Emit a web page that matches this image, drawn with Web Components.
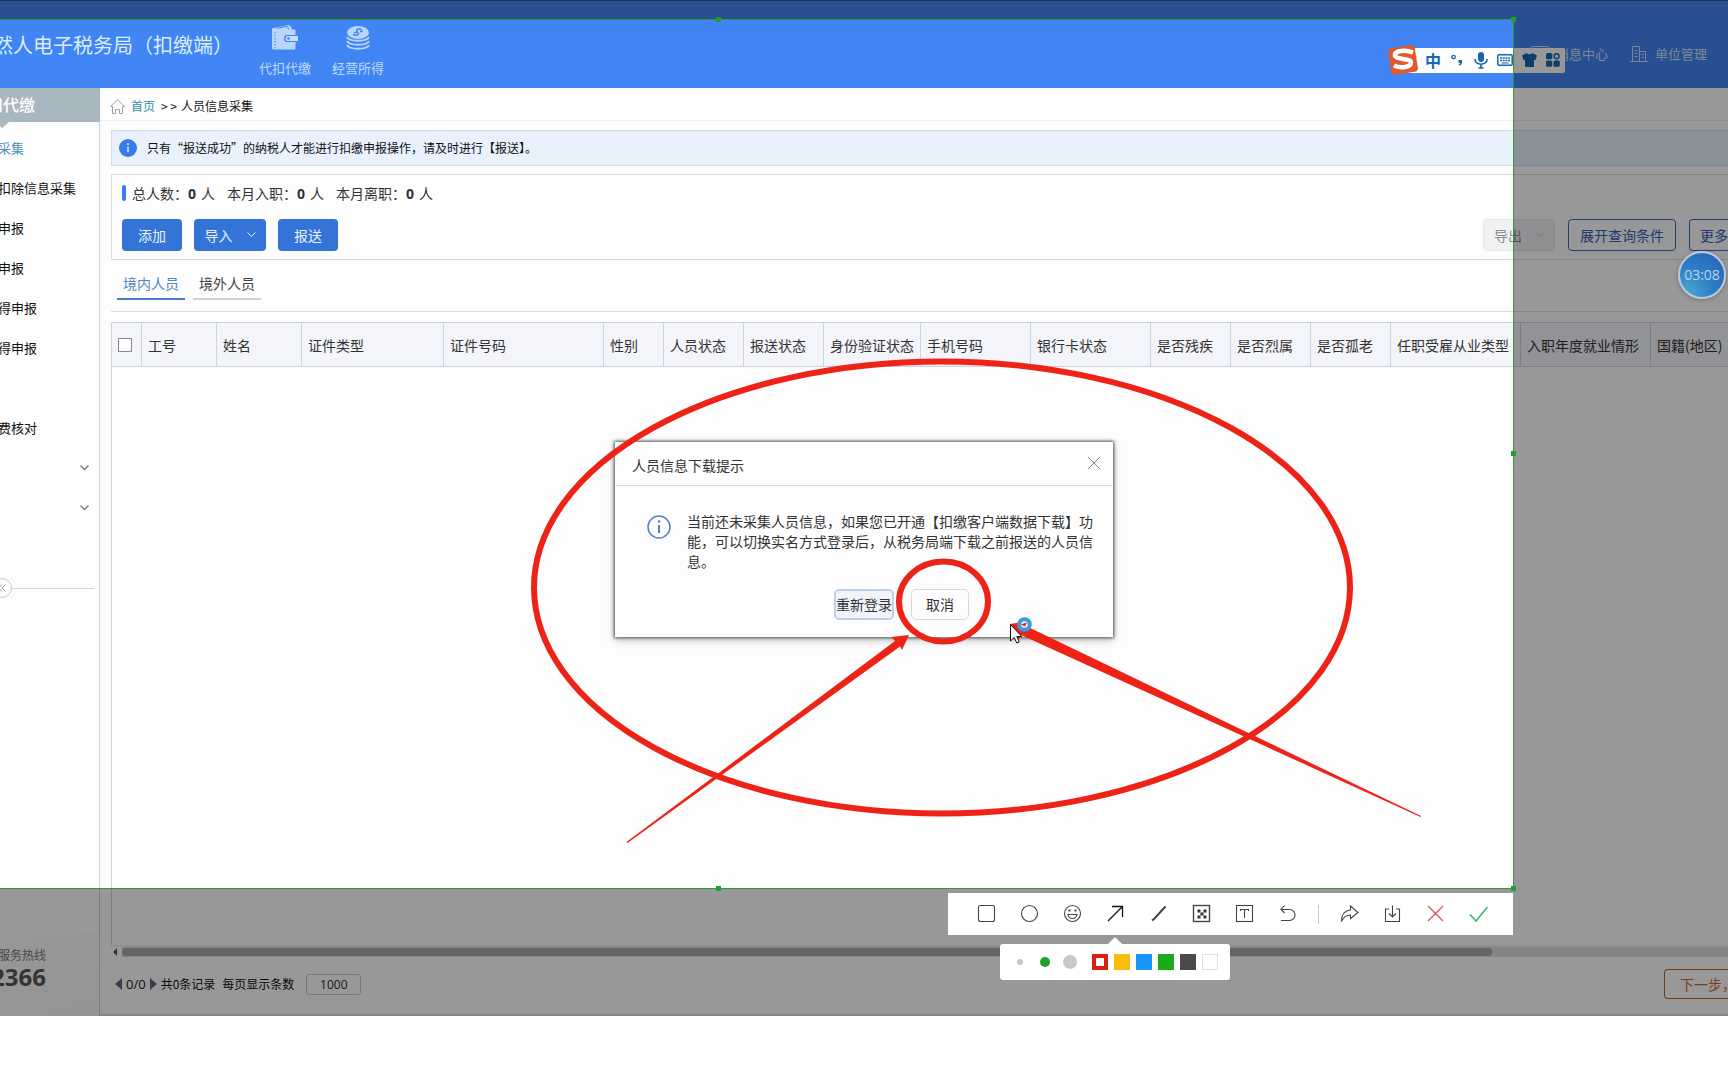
<!DOCTYPE html>
<html lang="zh-CN">
<head>
<meta charset="utf-8">
<title>自然人电子税务局（扣缴端）</title>
<style>
  html, body { margin: 0; height: 100%; background: #fdfdfd; }
  body { font: 14px/20px "Noto Sans CJK SC", "Open Sans", sans-serif; color: #333; overflow: hidden; }
</style>
</head>
<body>
<tax-app></tax-app>
<script>
const BASE = `*{box-sizing:border-box}button,input{font:inherit;margin:0}button{padding:0;background:none;border:0;color:inherit}a{color:inherit;text-decoration:none}svg{display:block}`;
function define(name, css, html) {
  const t = document.createElement('template');
  t.innerHTML = `<style>${BASE}${css}</style>${html}`;
  customElements.define(name, class extends HTMLElement {
    constructor() {
      super();
      this.attachShadow({ mode: 'open' }).append(t.content.cloneNode(true));
    }
  });
}

/* icon above label, used in the top bar */
define('module-link', `
  :host{display:block}
  a{display:flex;flex-direction:column;align-items:center;gap:7px;font-size:13px;color:#bcdcfd}
  .i{height:26px}`,
  `<a href="#"><span class="i"><slot name="icon"></slot></span><span><slot></slot></span></a>`);

define('top-link', `
  :host{display:block}
  a{display:flex;align-items:center;gap:7px;font-size:13px;color:#cfe2fb}`,
  `<a href="#"><slot name="icon"></slot><span><slot></slot></span></a>`);

define('app-header', `
  :host{display:flex;align-items:flex-start;height:88px;background:#4184f4;color:#d9efff;border-top:1px solid #33528f;white-space:nowrap}
  h1{margin:32px 0 0 -7px;font-size:20px;line-height:24px;font-weight:400}
  nav{display:flex;gap:21px;margin:24px 0 0 26px}
  .links{display:flex;gap:22px;margin:43px 21px 0 auto}`,
  `<h1>然人电子税务局（扣缴端）</h1>
  <nav>
    <module-link><svg slot="icon" width="26" height="26" viewBox="0 0 26 26"><path d="M0 3.500 16 0l3 1.500 1 3h2.500q1 0 1 1v4.500H15q-3 0-3 3.500t3 3.500h8.500v6q0 1.500-1.500 1.500H1.500Q0 24.500 0 23z" fill="#b9d6fb"/><path d="M5 3.500 15 1.200l2 3.300" fill="none" stroke="#4184f4"/><path d="M3 7v16" stroke="#4184f4" stroke-dasharray="1.500 1.500"/><path d="M16 11h10v5H16q-2.500 0-2.500-2.500T16 11z" fill="#c9e0fc"/><circle cx="16.500" cy="13.500" r="1.300" fill="#4184f4"/></svg>代扣代缴</module-link>
    <module-link><svg slot="icon" width="24" height="26" viewBox="0 0 24 26" fill="none" stroke="#b9d6fb" stroke-width="2"><ellipse cx="12" cy="7.500" rx="11" ry="6.500" fill="#b9d6fb" stroke="none"/><path d="M1 12c2 5 20 5 22 0M1 16c2 5 20 5 22 0M1 20c2 5 20 5 22 0"/><path d="M16 5c-3-2-6-1-5 1s3 3 0 4c-2 .5-3 0-4-.5M8 7.500h3m3-1h3" stroke="#4184f4" stroke-width="1.500"/></svg>经营所得</module-link>
  </nav>
  <div class="links">
    <top-link><svg slot="icon" width="18" height="16" viewBox="0 0 18 16" fill="none" stroke="#cfe2fb"><rect x=".5" y=".5" width="17" height="14" rx="1"/><path d="m1 2 8 6 8-6"/></svg>消息中心</top-link>
    <top-link><svg slot="icon" width="18" height="16" viewBox="0 0 18 16" fill="none" stroke="#cfe2fb"><path d="M0 15.500h18M2.500 15V.500h7V15M9.500 5.500h6V15M4.500 4.500h3m-3 3h3m-3 3h3m4-2h2m-2 3h2"/></svg>单位管理</top-link>
  </div>`);

define('side-item', `
  :host{display:flex;align-items:center;height:40px;font-size:13px;color:#111;white-space:nowrap}
  :host([current]){color:#4a90b8}
  a{margin-left:-2px}
  svg{display:none;margin:0 10px 0 auto}
  :host([group]) svg{display:block}`,
  `<a href="#"><slot></slot></a><svg width="9" height="6" viewBox="0 0 9 6" fill="none" stroke="#777" stroke-width="1.300"><path d="m.5.5 4 4 4-4"/></svg>`);

define('side-nav', `
  :host{display:flex;flex-direction:column;width:100px;flex:none;overflow:hidden}
  h2{margin:0;height:34px;background:#a8b7c0;color:#fff;font-size:16px;line-height:32px;font-weight:500;white-space:nowrap}
  h2 span{margin-left:-13px}
  .in{flex:1;display:flex;flex-direction:column;border-right:1px solid #cfcfd6}
  .tip{width:14px;height:6px;margin-left:-5px;background:#a8b7c0;clip-path:polygon(0 0,100% 0,50% 100%)}
  .fold{display:flex;align-items:center;margin:50px 5px 0 -8px}
  .fold button{width:20px;height:20px;border:1px solid #ccc;border-radius:50%;display:grid;place-items:center}
  .fold i{flex:1;border-top:1px solid #d8d8dc}
  .hot{margin-top:auto;font-size:12px;color:#777;height:84px;padding-top:14px;line-height:18px;background:linear-gradient(160deg,#fdfdfd,#f7f7f7)}
  .hot span,.hot b{display:block;margin-left:-2px}
  .hot b{margin-left:-9px;font:700 24px/26px "Open Sans",sans-serif;color:#555}`,
  `<h2><span>扣代缴</span></h2>
  <div class="in"><div class="tip"></div>
    <side-item current>采集</side-item><side-item>扣除信息采集</side-item><side-item>申报</side-item><side-item>申报</side-item><side-item>得申报</side-item><side-item>得申报</side-item><side-item></side-item><side-item>费核对</side-item><side-item group></side-item><side-item group></side-item>
    <div class="fold"><button aria-label="收起"><svg width="8" height="8" viewBox="0 0 8 8" fill="none" stroke="#999"><path d="M4 .5.5 4 4 7.500M7.500.5 4 4l3.500 3.500"/></svg></button><i></i></div>
    <div class="hot"><span>服务热线</span><b>2366</b></div>
  </div>`);

define('crumb-bar', `
  :host{display:flex;align-items:center;height:33px;padding:4px 0 0 10px;font-size:12px;color:#111;border-bottom:1px solid #eee}
  a{color:#2d8fa5;margin:0 6px}
  b{font-weight:400;margin-right:4px}`,
  `<svg width="15" height="15" viewBox="0 0 15 15" fill="none" stroke="#9aa3ad"><path d="M.5 7.500 7.500.8l7 6.700h-2v7h-3v-4h-4v4h-3v-7z"/></svg><a href="#">首页</a><b>&gt; &gt;</b><span>人员信息采集</span>`);

define('info-banner', `
  :host{display:flex;align-items:center;gap:10px;height:36px;margin:9px 0 0 11px;padding-left:7px;background:#e7f2fd;border:1px solid #d2dde6;border-right:0;font-size:12px;color:#111}`,
  `<svg width="18" height="18" viewBox="0 0 18 18"><circle cx="9" cy="9" r="9" fill="#3b7ce6"/><path d="M9 7.500V13" stroke="#d8e8ff" stroke-width="1.500"/><circle cx="9" cy="5" r="1" fill="#d8e8ff"/></svg><span><slot></slot></span>`);

define('app-button', `
  :host{display:block}
  button{display:flex;align-items:center;justify-content:center;gap:14px;height:32px;width:100%;padding:0 10px 1px;border-radius:4px;background:#3474d8;color:#e8f4ff;white-space:nowrap}
  svg{display:none}
  :host([menu]) svg{display:block}
  :host([kind=off]) button{background:#f0f1f3;border:1px solid #e4e5e8;color:#8d8d8d}
  :host([kind=off]) svg{color:#bbb}
  :host([kind=line]) button{background:none;border:1px solid #3b6cc4;color:#3563b8}
  :host([kind=next]) button{height:30px;padding-left:15px;background:none;border:1px solid #c4622a;color:#d0662e}
  :host([cut]) button{border-right:0;border-radius:4px 0 0 4px;justify-content:flex-start}`,
  `<button><span><slot></slot></span><svg width="9" height="6" viewBox="0 0 9 6" fill="none" stroke="currentColor"><path d="m.5.5 4 4 4-4"/></svg></button>`);

define('summary-card', `
  :host{display:flex;flex-direction:column;gap:16px;height:86px;margin:8px 0 0 11px;padding:8px 0 0 10px;border:1px solid #dcdcde;border-right:0}
  .stats{display:flex;align-items:center;height:20px;color:#333;white-space:nowrap}
  .stats i{width:4px;height:16px;border-radius:2px;background:#3b7be3;margin-right:6px}
  .stats span{margin-right:12px}
  .stats b{font-family:"Open Sans",sans-serif;margin-right:5px}
  .row{display:flex;gap:12px}
  .s{width:60px}.m{width:72px}.l{width:108px}
  .right{display:flex;gap:13px;margin-left:auto}
  .cut{width:39px}`,
  `<div class="stats"><i></i><span>总人数：<b>0</b>人</span><span>本月入职：<b>0</b>人</span><span>本月离职：<b>0</b>人</span></div>
  <div class="row"><app-button class="s">添加</app-button><app-button class="m" menu>导入</app-button><app-button class="s">报送</app-button>
  <div class="right"><app-button class="m" kind="off" menu>导出</app-button><app-button class="l" kind="line">展开查询条件</app-button><app-button class="cut" kind="line" cut>更多</app-button></div></div>`);

define('person-tabs', `
  :host{display:flex;gap:8px;height:52px;margin-left:11px;padding:12px 0 0 6px;border-bottom:1px solid #dcdcde}
  button{width:68px;height:28px;padding-bottom:4px;border-bottom:2px solid #d0cfd4;color:#444}
  .on{color:#4f86c4;border-color:#4a7acb}`,
  `<button class="on">境内人员</button><button>境外人员</button>`);

define('person-grid', `
  :host{display:block;flex:1;margin:10px 0 0 11px;border-left:1px solid #d0d2da;overflow:hidden}
  table{table-layout:fixed;border-collapse:separate;border-spacing:0;width:1680px}
  th{height:45px;padding:0 0 0 6px;text-align:left;font-weight:400;white-space:nowrap;background:#f3f5fa;border:1px solid #cfd3dd;border-width:1px 1px 1px 0}
  input{display:block;appearance:none;width:14px;height:14px;border:1px solid #888;background:#fff}`,
  `<table><colgroup>${[30,75,85,142,160,60,80,80,97,110,120,80,80,80,130,130,141].map(w=>`<col style="width:${w}px">`).join('')}</colgroup>
  <thead><tr><th><input type="checkbox" aria-label="全选"></th>${['工号','姓名','证件类型','证件号码','性别','人员状态','报送状态','身份验证状态','手机号码','银行卡状态','是否残疾','是否烈属','是否孤老','任职受雇从业类型','入职年度就业情形','国籍(地区)'].map(x=>`<th>${x}</th>`).join('')}</tr></thead></table>`);

define('h-scroll', `
  :host{display:flex;align-items:center;height:12px;margin-left:11px;background:#dcdcdc;border-top:2px solid #eee}
  .a{width:11px;height:10px;background:#fdfdfd;display:grid;place-items:center start;padding-left:2px}
  .t{height:8px;border-radius:4px;background:#a9a9a9;width:calc(100% - 247px)}`,
  `<span class="a"><svg width="4" height="8" viewBox="0 0 4 8" fill="#555"><path d="M4 0v8L0 4z"/></svg></span><span class="t"></span>`);

define('pager-bar', `
  :host{display:flex;align-items:center;height:59px;padding:0 0 3px 15px;font-size:12px;color:#111;border-bottom:2px solid #dedede;white-space:nowrap}
  button{flex:none}
  .n{font:13px/20px "Open Sans",sans-serif;margin:0 4px;color:#222}
  label{margin:0 12px 0 7px}
  .c{margin-left:4px}
  input{width:55px;height:21px;border:1px solid #c8c8cc;border-radius:3px;background:none;text-align:center;color:#333;font-family:"Open Sans",sans-serif;padding:0}
  app-button{margin-left:auto;width:64px;font-size:14px}`,
  `<button aria-label="上一页"><svg width="7" height="12" viewBox="0 0 7 12" fill="#667"><path d="M7 0v12L0 6z"/></svg></button><span class="n">0/0</span><button aria-label="下一页"><svg width="7" height="12" viewBox="0 0 7 12" fill="#667"><path d="M0 0v12l7-6z"/></svg></button><span class="c">共0条记录</span><label for="size">每页显示条数</label><input id="size" value="1000"><app-button kind="next" cut>下一步，</app-button>`);

define('notice-dialog', `
  :host{display:flex;flex-direction:column;width:498px;height:195px;background:#fdfdfd;box-shadow:0 0 3px 1px #555,0 3px 8px rgba(0,0,0,.25)}
  header{display:flex;align-items:center;height:44px;padding:2px 13px 0 17px;border-bottom:1px solid #dcdce0}
  header button{margin:-4px 0 0 auto}
  .body{display:flex;gap:16px;padding:25px 19px 0 32px}
  .body svg{flex:none;margin-top:4px}
  p{margin:0;width:407px}
  footer{display:flex;gap:17px;margin-top:18px;padding-left:219px}
  footer button{width:60px;height:31px;padding-bottom:2px;border:2px solid #c3d0e2;border-radius:5px;background:#eff4fb;white-space:nowrap}
  footer button+button{width:58px;border:1px solid #d9d9dd;background:#fdfdfd}`,
  `<header><span>人员信息下载提示</span><button aria-label="关闭"><svg width="12" height="12" viewBox="0 0 12 12" stroke="#888"><path d="m0 0 12 12M12 0 0 12"/></svg></button></header>
  <div class="body"><svg width="24" height="24" viewBox="0 0 24 24" fill="none" stroke="#5580c4" stroke-width="1.500"><circle cx="12" cy="12" r="11"/><path d="M12 10v8" stroke-width="2"/><circle cx="12" cy="6.500" r="1.300" fill="#5580c4" stroke="none"/></svg>
  <p>当前还未采集人员信息，如果您已开通【扣缴客户端数据下载】功能，可以切换实名方式登录后，从税务局端下载之前报送的人员信息。</p></div>
  <footer><button>重新登录</button><button>取消</button></footer>`);

/* floating input-method bar */
define('ime-bar', `
  :host{display:flex;align-items:center;height:30px}
  .logo{position:relative;z-index:1}
  .bar{display:flex;align-items:center;height:25px;margin-left:-14px;padding-left:17px;width:161px;background:#fdfdfd;border-radius:2px;color:#1767b3}
  button{width:24px;height:24px;display:grid;place-items:center;font-size:16px;font-weight:700;line-height:24px}`,
  `<svg class="logo" width="30" height="30" viewBox="0 0 30 30"><rect x="1.500" y="1.500" width="27" height="27" rx="4" fill="#e2592a" transform="rotate(-9 15 15)"/><path d="M25 7.500C17 4 6 6 7 10.500s16 2.500 16 7-10 6.500-17 3" fill="none" stroke="#fff" stroke-width="4.500"/></svg>
  <div class="bar"><button>中</button>
  <button aria-label="标点"><svg width="12" height="12" viewBox="0 0 12 12" fill="#1767b3"><circle cx="2.500" cy="3" r="1.700" fill="none" stroke="#1767b3" stroke-width="1.300"/><path d="M7.500 6h3.500v2.500q0 2.500-3 3v-1.200q1.300-.5 1.300-1.300H7.500z"/></svg></button>
  <button aria-label="语音"><svg width="14" height="17" viewBox="0 0 14 17"><rect x="4" y="0" width="6" height="10" rx="3" fill="#1767b3"/><path d="M1 7c0 7 12 7 12 0M7 12v4M4.500 16h5" fill="none" stroke="#1767b3" stroke-width="1.700"/></svg></button>
  <button aria-label="键盘"><svg width="16" height="12" viewBox="0 0 16 12"><rect x=".8" y=".8" width="14.400" height="10.400" rx="1" fill="none" stroke="#1767b3" stroke-width="1.500"/><path d="M3 4h10M3 6.500h10" stroke="#1767b3" stroke-width="1.500" stroke-dasharray="2 .7"/><path d="M4.500 9h7" stroke="#1767b3"/></svg></button>
  <button aria-label="皮肤"><svg width="15" height="14" viewBox="0 0 15 14" fill="#1767b3"><path d="M4.500 0q3 2.500 6 0L15 2.500 13.500 7H12v7H3V7H1.500L0 2.500z"/></svg></button>
  <button aria-label="工具箱"><svg width="14" height="14" viewBox="0 0 14 14" fill="#1767b3"><rect width="6.300" height="6.300" rx="1.500"/><rect y="7.500" width="6.300" height="6.300" rx="1.500"/><rect x="7.500" y="7.500" width="6.300" height="6.300" rx="1.500"/><circle cx="10.600" cy="3.200" r="2.400" fill="none" stroke="#1767b3" stroke-width="1.500"/></svg></button></div>`);

define('capture-tools', `
  :host{display:flex;align-items:center;width:565px;height:42px;padding-left:17px;background:#fff;color:#444}
  button{width:43px;height:42px;padding-bottom:2px;display:grid;place-items:center}
  i{width:1px;height:19px;margin:0 9px;background:#ccc}`,
  [
    ['矩形','<rect x="1.500" y="1.500" width="16" height="16" rx="2"/>'],
    ['椭圆','<circle cx="9.500" cy="9.500" r="8"/>'],
    ['表情','<circle cx="9.500" cy="9.500" r="8"/><path d="M5 10.500h9q-.5 4-4.500 4t-4.500-4z"/><path d="M5.500 6.500h2m4 0h2" stroke-width="2"/>'],
    ['箭头','<path d="M2 17 16 3M6 2.500h10.500V13" stroke="#111" stroke-width="1.300"/>'],
    ['画笔','<path d="m3 16.500 2-1.500L16.500 2.500" stroke-width="2"/>'],
    ['马赛克','<rect x="1.500" y="1.500" width="16" height="16" stroke-width="1.400"/><path d="M5.500 5.500h3v3h-3zm6 0h3v3h-3zm-3 3h3v3h-3zm-3 3h3v3h-3zm6 0h3v3h-3z" fill="#333" stroke="none"/>'],
    ['文字','<rect x="1.500" y="1.500" width="16" height="16"/><path d="M5.500 7V5.500h8V7M9.500 5.500V14"/>'],
    ['撤销','<path d="M6.500 1.500 3 5.500l3.500 3.500M3 5.500h8.500a5.500 5.500 0 0 1 0 11H3"/>'],
    null,
    ['分享','<path d="M1.500 17.500c0-7 3-11 9-11.500V2l7.500 6.500-7.500 6V11c-4 0-7 2-9 6.500z"/>'],
    ['保存','<path d="M6 5H2.500v12.500h14V5H13M9.500 1.500v11M6 9.500l3.500 3.500L13 9.500"/>'],
    ['取消','<path d="m2 2 15 15M17 2 2 17" stroke="#e0505a" stroke-width="1.300"/>'],
    ['完成','<path d="m1 10.500 6 6.500L18.500 3" stroke="#2db873" stroke-width="1.500"/>']
  ].map(x => x ? `<button aria-label="${x[0]}"><svg width="19" height="19" viewBox="0 0 19 19" fill="none" stroke="#444" stroke-width="1.100">${x[1]}</svg></button>` : '<i></i>').join(''));

define('color-palette', `
  :host{display:flex;flex-direction:column;align-items:center;width:230px}
  .tip{width:14px;height:7px;background:#fff;clip-path:polygon(50% 0,100% 100%,0 100%)}
  .box{display:flex;align-items:center;align-self:stretch;height:36px;padding-left:17px;background:#fff;border-radius:3px}
  .d{width:6px;height:6px;border-radius:50%;background:#c8c8c8}
  .d:nth-child(2){width:10px;height:10px;background:#20a224;margin:0 13px 0 17px}
  .d:nth-child(3){width:14px;height:14px;margin-right:15px}
  .c{width:16px;height:16px;margin-right:6px}`,
  `<div class="tip"></div><div class="box"><button class="d" aria-label="细"></button><button class="d" aria-label="中"></button><button class="d" aria-label="粗"></button>
  <button class="c" aria-label="红" style="border:4px solid #dc1f14"></button><button class="c" aria-label="黄" style="background:#f9bd0e"></button><button class="c" aria-label="蓝" style="background:#1a96fb"></button><button class="c" aria-label="绿" style="background:#19ac19"></button><button class="c" aria-label="黑" style="background:#4a4a4a"></button><button class="c" aria-label="白" style="border:1px solid #e2e2e2"></button></div>`);

/* red marks drawn on the captured area, and the busy pointer */
define('red-marks', `
  :host{display:block}`,
  `<svg width="1728" height="1016" viewBox="0 0 1728 1016"><g fill="none" stroke="#ee2318" stroke-width="6"><ellipse cx="942" cy="587.500" rx="408" ry="226"/><ellipse cx="943.500" cy="601.500" rx="44.500" ry="40"/></g>
  <g fill="#ee2318"><path d="M626.500 842 895 641l-3.500-4 17.500-2-7 15-2-3.500L627.500 843z"/><path d="m1010 624 20-3-4 5L1421 816l-.5 1L1021 635l-2 5z"/></g>
  <circle cx="1024.500" cy="624.500" r="5.300" fill="#fbe9e8" stroke="#3a9be0" stroke-width="4"/><path d="m1021 624.500 6-2-2 4z" fill="#ee2318"/>
  <path d="M1010.500 624.500v16.500l3.700-3.500 2.600 5.500 2.400-1-2.400-5.500h5z" fill="#fff" stroke="#111"/></svg>`);

define('timer-ball', `
  :host{display:grid;place-items:center;width:48px;height:48px;border:2px solid #b8cbdc;border-radius:50%;background:radial-gradient(circle at 15% 90%,#4aa6d0,#2c7cc6 50%,#2460b4);color:#b9d3ea;font:14px/20px "Open Sans",sans-serif;box-shadow:0 1px 4px rgba(0,0,0,.25)}`,
  `<span>03:08</span>`);

/* clear area with the rest of the screen dimmed around it */
define('capture-frame', `
  :host{display:block;border:1px solid #2c9c37;border-left:0;box-shadow:0 0 0 2000px rgba(0,0,0,.4)}
  i{position:absolute;width:5px;height:5px;background:#20a030}`,
  `<i style="left:716px;top:-3px"></i><i style="right:-3px;top:-3px"></i><i style="right:-3px;top:calc(50% - 3px)"></i><i style="left:716px;bottom:-3px"></i><i style="right:-3px;bottom:-3px"></i>`);

define('tax-app', `
  :host{position:relative;display:flex;flex-direction:column;height:calc(100vh - 64px);overflow:hidden;background:#fdfdfd}
  .cols{flex:1;display:flex;min-height:0}
  main{flex:1;min-width:0;display:flex;flex-direction:column}
  .over{position:absolute}
  ime-bar{left:1388px;top:45px}
  notice-dialog{left:615px;top:442px}
  capture-frame{left:0;top:19px;width:1514px;height:870px}
  red-marks{left:0;top:0}
  timer-ball{left:1678px;top:251px}
  capture-tools{left:948px;top:893px}
  color-palette{left:1000px;top:937px}`,
  `<app-header></app-header>
  <div class="cols"><side-nav></side-nav>
    <main><crumb-bar></crumb-bar><info-banner>只有“报送成功”的纳税人才能进行扣缴申报操作，请及时进行【报送】。</info-banner><summary-card></summary-card><person-tabs></person-tabs><person-grid></person-grid><h-scroll></h-scroll><pager-bar></pager-bar></main></div>
  <ime-bar class="over"></ime-bar><notice-dialog class="over"></notice-dialog><capture-frame class="over"></capture-frame><red-marks class="over"></red-marks><timer-ball class="over"></timer-ball><capture-tools class="over"></capture-tools><color-palette class="over"></color-palette>`);
</script>
</body>
</html>
